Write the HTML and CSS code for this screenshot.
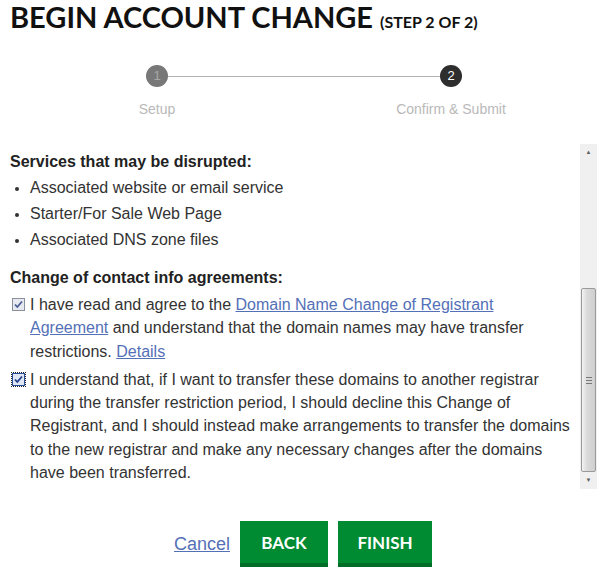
FILE: index.html
```html
<!DOCTYPE html>
<html>
<head>
<meta charset="utf-8">
<link rel="stylesheet" href="styles.css">
</head>
<body>
<h1 class="title">BEGIN ACCOUNT CHANGE <span class="title-step">(STEP 2 OF 2)</span></h1>

<div class="stepper">
  <div class="step-dot step-dot-done">1</div>
  <div class="step-line"></div>
  <div class="step-dot step-dot-current">2</div>
  <div class="step-label">Setup</div>
  <div></div>
  <div class="step-label">Confirm &amp; Submit</div>
</div>

<div class="scrollbox">
  <div class="scroll-content">
    <h3 class="section-title">Services that may be disrupted:</h3>
    <ul class="services">
      <li>Associated website or email service</li>
      <li>Starter/For Sale Web Page</li>
      <li>Associated DNS zone files</li>
    </ul>
    <h3 class="section-title section-title-second">Change of contact info agreements:</h3>
    <div class="agree">
      <span class="check"><svg width="13" height="13" viewBox="0 0 13 13"><rect x="0.5" y="0.5" width="12" height="12" fill="#e6e9f0" stroke="#8a8f9c"/><path d="M3 6.5 L5.3 9 L10 3.5" fill="none" stroke="#4a5d99" stroke-width="1.8"/></svg></span>
      <p class="agree-text">I have read and agree to the <a href="#" class="link">Domain Name Change of Registrant Agreement</a> and understand that the domain names may have transfer restrictions. <a href="#" class="link">Details</a></p>
    </div>
    <div class="agree">
      <span class="check check-focus"><svg width="13" height="13" viewBox="0 0 13 13"><rect x="0.5" y="0.5" width="12" height="12" fill="#dfe6f4" stroke="#2a4f99"/><path d="M3 6.5 L5.3 9 L10 3.5" fill="none" stroke="#203f8a" stroke-width="1.8"/></svg></span>
      <p class="agree-text">I understand that, if I want to transfer these domains to another registrar during the transfer restriction period, I should decline this Change of Registrant, and I should instead make arrangements to transfer the domains to the new registrar and make any necessary changes after the domains have been transferred.</p>
    </div>
  </div>
  <div class="scrollbar">
    <div class="sb-arrow">&#9650;</div>
    <div class="sb-track">
      <div class="sb-thumb"><span class="sb-grip"></span></div>
    </div>
    <div class="sb-arrow">&#9660;</div>
  </div>
</div>

<div class="actions">
  <a href="#" class="cancel">Cancel</a>
  <button class="btn btn-back">BACK</button>
  <button class="btn btn-finish">FINISH</button>
</div>
</body>
</html>
```
FILE: styles.css
```css
html, body {
  margin: 0;
  padding: 0;
  background: #fff;
}
body {
  width: 612px;
  height: 574px;
  overflow: hidden;
  font-family: "Liberation Sans", Arial, sans-serif;
  color: #333;
}
.title {
  margin: 0;
  padding: 0 0 0 10px;
  font-family: Lato, "Liberation Sans", sans-serif;
  font-weight: 700;
  font-size: 29px;
  line-height: 34px;
  color: #111;
  letter-spacing: 0;
  white-space: nowrap;
}
.title-step {
  font-size: 16px;
}
.stepper {
  margin: 26px 0 0 97px;
  width: 414px;
  display: grid;
  grid-template-columns: 120px 1fr 120px;
  align-items: center;
  justify-items: center;
}
.step-dot {
  width: 22px;
  height: 22px;
  border-radius: 50%;
  color: #fff;
  font-size: 13px;
  line-height: 22px;
  text-align: center;
}
.step-dot-done {
  background: #787878;
  color: #a8a8a8;
}
.step-dot-current {
  background: #2e2e2e;
  color: #fff;
}
.step-line {
  justify-self: stretch;
  height: 1px;
  background: #b3b3b3;
  margin: 0 -49px;
}
.step-label {
  margin-top: 14px;
  font-size: 14px;
  color: #b9b9b9;
  white-space: nowrap;
}
.scrollbox {
  margin-top: 27px;
  height: 345px;
  display: flex;
}
.scroll-content {
  flex: 1;
  padding: 8px 0 0 10px;
}
.section-title {
  margin: 0;
  font-size: 16px;
  font-weight: 700;
  line-height: 20px;
  color: #222;
}
.section-title-second {
  margin-top: 15px;
}
.services {
  margin: 3px 0 0;
  padding: 0 0 0 20px;
  font-size: 16px;
  line-height: 26px;
}
.services li::marker {
  font-size: 13px;
}
.agree {
  display: flex;
  margin-top: 5px;
}
.check {
  width: 13px;
  height: 13px;
  margin: 5px 5px 0 2px;
  flex: none;
  display: flex;
}
.check-focus {
  outline: 1px dotted #222;
}
.agree-text {
  margin: 0;
  width: 543px;
  font-size: 16px;
  line-height: 23.3px;
}
.link {
  color: #5470b7;
}
.scrollbar {
  width: 17px;
  margin-right: 15px;
  background: #f0f0f0;
  display: flex;
  flex-direction: column;
}
.sb-arrow {
  height: 17px;
  font-size: 6px;
  line-height: 17px;
  text-align: center;
  color: #606060;
}
.sb-track {
  flex: 1;
  display: flex;
  flex-direction: column;
  justify-content: flex-end;
}
.sb-thumb {
  height: 182px;
  margin: 0 1px;
  border: 1px solid #9a9a9a;
  border-radius: 2px;
  background: linear-gradient(to right, #f2f2f2, #dadada 40%, #cfcfcf);
  display: flex;
  align-items: center;
  justify-content: center;
}
.sb-grip {
  width: 6px;
  height: 5px;
  border-top: 1px solid #777;
  border-bottom: 1px solid #777;
  background: linear-gradient(#777, #777) center / 6px 1px no-repeat;
}
.actions {
  margin-top: 32px;
  display: flex;
  justify-content: center;
  align-items: center;
  gap: 10px;
  padding-right: 6px;
}
.cancel {
  color: #5470b7;
  font-size: 18px;
  margin-top: 1px;
}
.btn {
  height: 46px;
  border: 0;
  border-bottom: 4px solid #006e27;
  background: #008a32;
  color: #fff;
  font-family: Lato, "Liberation Sans", sans-serif;
  font-weight: 700;
  font-size: 17px;
  padding: 0;
  text-align: center;
}
.btn-back {
  width: 88px;
}
.btn-finish {
  width: 94px;
}
```
